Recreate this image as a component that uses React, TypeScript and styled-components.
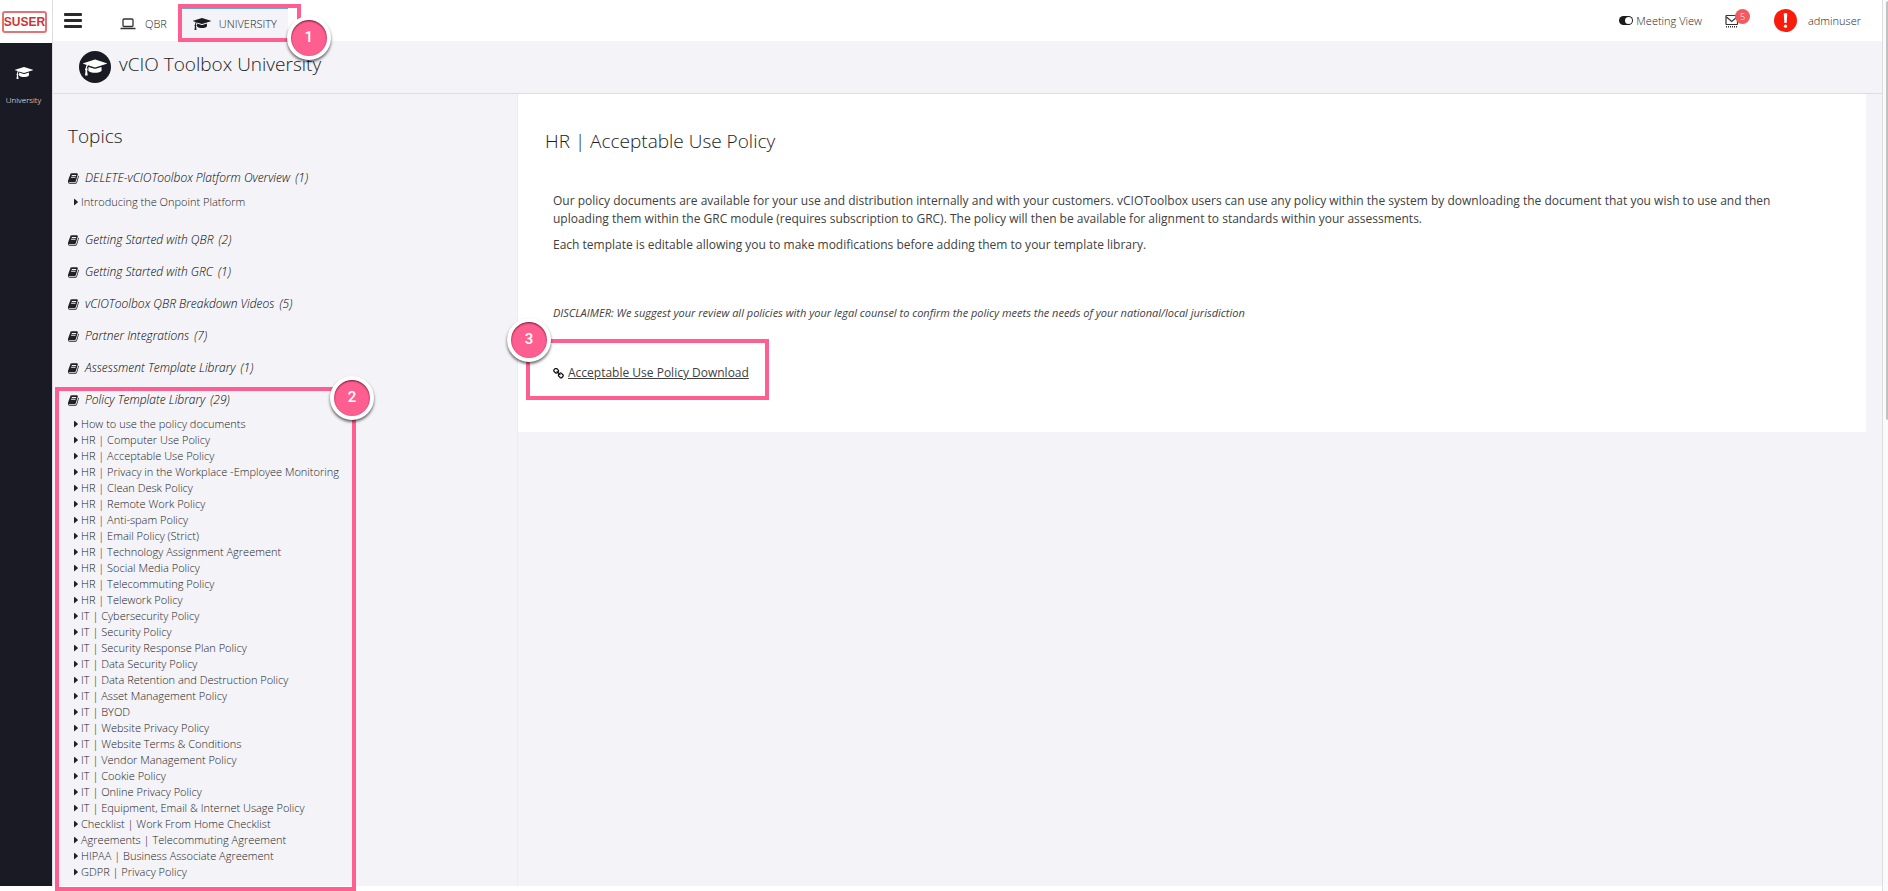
import React from 'react';
import styled, { createGlobalStyle, css } from 'styled-components';

const color = {
  canvas: '#f3f3f8',
  rail: '#191a23',
  line: '#dcdce1',
  ink: '#1c1c1c',
  text: '#404040',
  pink: '#ff5f90',
  red: '#f71c0c',
};

const GlobalStyle = createGlobalStyle`
  *, *::before, *::after { box-sizing: border-box; }
  body {
    margin: 0;
    background: #fff;
    color: ${color.ink};
    font: 300 11px/16px 'Open Sans', 'Noto Sans', sans-serif;
    overflow: hidden;
  }
  h1, h2, h3, p, ul { margin: 0; padding: 0; font-weight: inherit; }
  ul { list-style: none; }
  a { color: inherit; text-decoration: none; }
  button { margin: 0; padding: 0; border: 0; background: none; color: inherit; font: inherit; cursor: pointer; }
  svg { display: block; flex: none; }
`;

const Shell = styled.div`
  display: flex;
  min-height: 100vh;
`;

const Rail = styled.nav`
  display: flex;
  flex-direction: column;
  flex: none;
  width: 53px;
  margin-bottom: 5px;
  border-right: 1px solid ${color.line};
  background: ${color.rail};
`;

const LogoCell = styled.a`
  display: flex;
  align-items: center;
  justify-content: center;
  height: 43px;
  padding-right: 3px;
  background: #fff;
`;

const Logo = styled.span`
  display: flex;
  align-items: center;
  justify-content: center;
  width: 45px;
  height: 22px;
  border: 2px solid #e57373;
  border-radius: 3px;
  color: #cf3535;
  font: 700 12px/16px 'Liberation Sans', sans-serif;
`;

const RailLink = styled.a`
  display: flex;
  flex-direction: column;
  align-items: center;
  gap: 12px;
  padding: 23px 5px 0 0;
  color: #fff;
  font-size: 8px;
`;

const Page = styled.div`
  display: flex;
  flex-direction: column;
  flex: 1;
  min-width: 0;
  margin-bottom: 5px;
  background: ${color.canvas};
`;

const TopBar = styled.header`
  display: flex;
  justify-content: space-between;
  height: 41px;
  padding: 0 21px 0 11px;
  background: #fff;
`;

const MenuButton = styled.button`
  display: flex;
  flex-direction: column;
  gap: 3px;
  width: 18px;
  margin: 13px 26px 0 0;
  align-self: flex-start;
`;

const MenuBar = styled.span`
  height: 3px;
  border-radius: 1px;
  background: #2b2b2b;
`;

const BarGroup = styled.div`
  display: flex;
  align-items: center;
`;

const Tabs = styled.div`
  display: flex;
  align-self: flex-end;
  gap: 4px;
`;

const Tab = styled.a<{ $active?: boolean }>`
  position: relative;
  display: flex;
  align-items: center;
  gap: 8px;
  height: 33px;
  padding: 0 11px 2px;
  border-top: 1px solid transparent;
  ${({ $active }) => $active && css`
    border-top-color: #6fa5d0;
    background: ${color.canvas};
  `}
`;

const TabIcon = styled.span`
  display: flex;
  justify-content: center;
  width: 18px;
`;

const MeetingToggle = styled.button`
  display: flex;
  align-items: center;
  gap: 3px;
  margin-right: 23px;
`;

const MailButton = styled.button`
  position: relative;
  margin-right: 35px;
`;

const MailCount = styled.span`
  position: absolute;
  top: -5px;
  left: 10px;
  width: 15px;
  height: 15px;
  border-radius: 50%;
  background: #f25a5f;
  color: #fff;
  font-size: 9px;
  line-height: 15px;
  text-align: center;
`;

const UserLink = styled.a`
  display: flex;
  align-items: center;
  gap: 11px;
`;

const PageHead = styled.div`
  display: flex;
  align-items: center;
  gap: 8px;
  height: 53px;
  padding: 0 26px;
  border-bottom: 1px solid ${color.line};
`;

const HeadIcon = styled.span`
  display: flex;
  align-items: center;
  justify-content: center;
  width: 32px;
  height: 32px;
  border-radius: 50%;
  background: ${color.rail};
  color: #fff;
`;

const PageTitle = styled.h1`
  font-size: 19px;
  line-height: 24px;
  margin-bottom: 6px;
`;

const Columns = styled.div`
  display: flex;
  flex: 1;
  align-items: stretch;
`;

const Topics = styled.aside`
  flex: none;
  width: 465px;
  padding: 30px 0 6px 15px;
  border-right: 1px solid #ececf1;
`;

const TopicsTitle = styled.h2`
  margin-bottom: 22px;
  font-size: 19px;
  line-height: 24px;
`;

const Topic = styled.section<{ $open?: boolean }>`
  position: relative;
  width: fit-content;
  margin-bottom: ${({ $open }) => ($open ? 22 : 16)}px;
  &:last-child { margin-bottom: 0; }
`;

const TopicButton = styled.button`
  display: flex;
  align-items: center;
  gap: 6px;
  font-size: 12px;
  line-height: 16px;
  font-style: italic;
  color: #000;
`;

const TopicCount = styled.span`
  margin-left: 5px;
`;

const Lessons = styled.ul`
  padding: 8px 0 0 6px;
`;

const LessonLink = styled.a`
  display: flex;
  align-items: center;
  gap: 3px;
`;

const Content = styled.main`
  flex: 1;
  min-width: 0;
  padding-right: 16px;
`;

const Card = styled.article`
  padding: 35px 51px 50px 27px;
  background: #fff;
`;

const CardTitle = styled.h2`
  font-size: 19px;
  line-height: 24px;
`;

const Prose = styled.div`
  padding: 39px 0 0 8px;
  color: ${color.text};
  font-size: 12px;
  line-height: 18px;
  font-weight: 400;
`;

const Paragraph = styled.p`
  margin-bottom: 8px;
`;

const Disclaimer = styled.p`
  padding: 42px 0;
  font-size: 11px;
  line-height: 18px;
  font-style: italic;
`;

const Download = styled.div`
  position: relative;
  display: flex;
  align-items: center;
  gap: 4px;
  width: fit-content;
`;

const DownloadLink = styled.a`
  text-decoration: underline;
`;

const Highlight = styled.span<{ $inset: string }>`
  position: absolute;
  inset: ${({ $inset }) => $inset};
  border: 4px solid ${color.pink};
  pointer-events: none;
  z-index: 1;
`;

const StepBadge = styled.span<{ $side: 'left' | 'right'; $drop: number; $shift: number }>`
  position: absolute;
  top: ${({ $drop }) => $drop}px;
  ${({ $side }) => $side}: ${({ $shift }) => $shift}px;
  width: 44px;
  height: 44px;
  border: 4px solid #fff;
  border-radius: 50%;
  background: ${color.pink};
  box-shadow: 0 2px 3px rgba(0, 0, 0, 0.6), inset 0 1px 2px rgba(60, 0, 20, 0.8);
  color: #fff;
  font: 500 15px/34px Roboto, 'Liberation Sans', sans-serif;
  text-align: center;
`;

const ScrollTrack = styled.div`
  flex: none;
  width: 6px;
  padding: 1px 0 0 3px;
  border-left: 1px solid ${color.line};
  background: #fafafa;
`;

const ScrollThumb = styled.div`
  height: 47vh;
  border-radius: 2px 0 0 2px;
  background: #c1c1c1;
`;

const CapIcon = ({ width }: { width: number }) => (
  <svg width={width} height={Math.round((width * 7) / 9)} viewBox="0 0 2304 1792" fill="currentColor" aria-hidden>
    <path d="M1774 836l18 316q4 69-82 128t-235 93.500-323 34.500-323-34.500-235-93.500-82-128l18-316 574 181q22 7 48 7t48-7zm530-324q0 23-22 31l-1120 352q-4 1-10 1t-10-1l-652-206q-43 34-71 111.500t-34 178.500q63 36 63 109 0 69-58 107l58 433q2 14-8 25-9 11-24 11h-192q-15 0-24-11-10-11-8-25l58-433q-58-38-58-107 0-73 65-111 11-207 98-330l-333-104q-22-8-22-31t22-31l1120-352q4-1 10-1t10 1l1120 352q22 8 22 31z" />
  </svg>
);

const BookIcon = () => (
  <svg width="11" height="11" viewBox="40 128 1640 1536" fill="#222" aria-hidden>
    <path d="M1639 478q40 57 18 129l-275 906q-19 64-76.500 107.500t-122.500 43.500h-923q-77 0-148.500-53.500t-99.500-131.500q-24-67-2-127 0-4 3-27t4-37q1-8-3-21.500t-3-19.500q2-11 8-21t16.500-23.500 16.500-23.500q23-38 45-91.500t30-91.500q3-10 .5-30t-.5-28q3-11 17-28t17-23q21-36 42-92t25-90q1-9-2.500-32t.5-28q4-13 22-30.500t22-22.500q19-26 42.500-84.500t27.500-96.500q1-8-3-25.500t-2-26.500q2-8 9-18t18-23 17-21q8-12 16.500-30.500t15-35 16-36 19.500-32 26.500-23.500 36-11.500 47.500 5.500l-1 3q38-9 51-9h761q74 0 114 56t18 130l-274 906q-36 119-71.500 153.500t-128.500 34.500h-869q-27 0-38 15-11 16-1 43 24 70 144 70h923q29 0 56-15.500t35-41.500l300-987q7-22 5-57 38 15 59 43zm-1064 2q-4 13 2 22.500t20 9.500h608q13 0 25.500-9.500t16.500-22.500l21-64q4-13-2-22.500t-20-9.500h-608q-13 0-25.500 9.500t-16.500 22.500zm-83 256q-4 13 2 22.500t20 9.500h608q13 0 25.500-9.500t16.500-22.500l21-64q4-13-2-22.500t-20-9.500h-608q-13 0-25.500 9.500t-16.500 22.500z" />
  </svg>
);

const CaretIcon = () => (
  <svg width="4" height="8" viewBox="0 0 4 8" fill="#222" aria-hidden>
    <path d="M0 1.300Q0 .5.7 1L3.600 3.600Q4 4 3.600 4.400L.7 7Q0 7.500 0 6.700Z" />
  </svg>
);

const LaptopIcon = () => (
  <svg width="16" height="12" viewBox="0 0 16 12" fill="none" stroke="#333" aria-hidden>
    <rect x="3" y="1" width="10" height="7.500" rx="1" strokeWidth="1.300" />
    <path d="M0.500 10.500H15.500" strokeWidth="1.500" />
  </svg>
);

const ToggleIcon = () => (
  <svg width="14" height="9" viewBox="0 0 14 9" aria-hidden>
    <rect x="0" y="0" width="14" height="9" rx="4.500" fill="#1c1c1c" />
    <circle cx="9.500" cy="4.500" r="3.500" fill="#fff" />
  </svg>
);

const MailIcon = () => (
  <svg width="14" height="14" viewBox="0 0 14 14" fill="none" stroke="#333" aria-hidden>
    <rect x="1" y="1.500" width="11.500" height="9" rx="0.500" strokeWidth="1.200" />
    <path d="M1.500 3L6.700 7.500L12 3" strokeWidth="1.200" />
    <path d="M1 12.800H13" strokeWidth="1.400" strokeDasharray="1 1" />
  </svg>
);

const AlertIcon = () => (
  <svg width="23" height="23" viewBox="0 0 23 23" aria-hidden>
    <circle cx="11.500" cy="11.500" r="11.500" fill={color.red} />
    <path d="M9.700 4.600Q11.500 3.600 13.300 4.600L12.600 14H10.400Z" fill="#fff" />
    <circle cx="11.500" cy="17.200" r="1.600" fill="#fff" />
  </svg>
);

const ChainIcon = () => (
  <svg width="11" height="11" viewBox="60 60 1670 1670" fill="#111" aria-hidden>
    <path d="M1520 1216q0-40-28-68l-208-208q-28-28-68-28-42 0-72 32 3 3 19 18.500t21.500 21.500 15 19 13 25.500 3.500 27.500q0 40-28 68t-68 28q-15 0-27.500-3.500t-25.500-13-19-15-21.500-21.500-18.500-19q-33 31-33 73 0 40 28 68l206 207q27 27 68 27 40 0 68-26l147-146q28-28 28-67zm-703-705q0-40-28-68l-206-207q-28-28-68-28-39 0-68 27l-147 146q-28 28-28 67 0 40 28 68l208 208q27 27 68 27 42 0 72-31-3-3-19-18.500t-21.500-21.500-15-19-13-25.500-3.500-27.500q0-40 28-68t68-28q15 0 27.500 3.500t25.500 13 19 15 21.500 21.500 18.500 19q33-31 33-73zm895 705q0 120-85 203l-147 146q-83 83-203 83-121 0-204-85l-206-207q-83-83-83-203 0-123 88-209l-88-88q-86 88-208 88-120 0-204-84l-208-208q-84-84-84-204t85-203l147-146q83-83 203-83 121 0 204 85l206 207q83 83 83 203 0 123-88 209l88 88q86-88 208-88 120 0 204 84l208 208q84 84 84 204z" />
  </svg>
);

type TopicData = { title: string; count: number; lessons?: string[]; step?: number };

const topics: TopicData[] = [
  { title: 'DELETE-vCIOToolbox Platform Overview', count: 1, lessons: ['Introducing the Onpoint Platform'] },
  { title: 'Getting Started with QBR', count: 2 },
  { title: 'Getting Started with GRC', count: 1 },
  { title: 'vCIOToolbox QBR Breakdown Videos', count: 5 },
  { title: 'Partner Integrations', count: 7 },
  { title: 'Assessment Template Library', count: 1 },
  {
    title: 'Policy Template Library',
    count: 29,
    step: 2,
    lessons: [
      'How to use the policy documents',
      'HR | Computer Use Policy',
      'HR | Acceptable Use Policy',
      'HR | Privacy in the Workplace -Employee Monitoring',
      'HR | Clean Desk Policy',
      'HR | Remote Work Policy',
      'HR | Anti-spam Policy',
      'HR | Email Policy (Strict)',
      'HR | Technology Assignment Agreement',
      'HR | Social Media Policy',
      'HR | Telecommuting Policy',
      'HR | Telework Policy',
      'IT | Cybersecurity Policy',
      'IT | Security Policy',
      'IT | Security Response Plan Policy',
      'IT | Data Security Policy',
      'IT | Data Retention and Destruction Policy',
      'IT | Asset Management Policy',
      'IT | BYOD',
      'IT | Website Privacy Policy',
      'IT | Website Terms & Conditions',
      'IT | Vendor Management Policy',
      'IT | Cookie Policy',
      'IT | Online Privacy Policy',
      'IT | Equipment, Email & Internet Usage Policy',
      'Checklist | Work From Home Checklist',
      'Agreements | Telecommuting Agreement',
      'HIPAA | Business Associate Agreement',
      'GDPR | Privacy Policy',
    ],
  },
];

export default function App() {
  return (
    <Shell>
      <GlobalStyle />
      <Rail>
        <LogoCell href="#home"><Logo>SUSER</Logo></LogoCell>
        <RailLink href="#university"><CapIcon width={18} />University</RailLink>
      </Rail>
      <Page>
        <TopBar>
          <BarGroup>
            <MenuButton aria-label="Menu"><MenuBar /><MenuBar /><MenuBar /></MenuButton>
            <Tabs>
              <Tab href="#qbr"><TabIcon><LaptopIcon /></TabIcon>QBR</Tab>
              <Tab href="#university" $active>
                <TabIcon><CapIcon width={18} /></TabIcon>UNIVERSITY
                <Highlight $inset="-5px -13px -1px -4px">
                  <StepBadge $side="right" $drop={8} $shift={-34}>1</StepBadge>
                </Highlight>
              </Tab>
            </Tabs>
          </BarGroup>
          <BarGroup>
            <MeetingToggle><ToggleIcon />Meeting View</MeetingToggle>
            <MailButton aria-label="Messages"><MailIcon /><MailCount>5</MailCount></MailButton>
            <UserLink href="#account"><AlertIcon />adminuser</UserLink>
          </BarGroup>
        </TopBar>
        <PageHead>
          <HeadIcon><CapIcon width={24} /></HeadIcon>
          <PageTitle>vCIO Toolbox University</PageTitle>
        </PageHead>
        <Columns>
          <Topics>
            <TopicsTitle>Topics</TopicsTitle>
            {topics.map(({ title, count, lessons, step }) => (
              <Topic key={title} $open={!!lessons}>
                <TopicButton aria-expanded={!!lessons}>
                  <BookIcon />
                  <span>{title}<TopicCount>({count})</TopicCount></span>
                </TopicButton>
                {lessons && (
                  <Lessons>
                    {lessons.map((lesson) => (
                      <li key={lesson}><LessonLink href="#lesson"><CaretIcon />{lesson}</LessonLink></li>
                    ))}
                  </Lessons>
                )}
                {step && (
                  <Highlight $inset="-5px -17px -11px -13px">
                    <StepBadge $side="right" $drop={-15} $shift={-22}>{step}</StepBadge>
                  </Highlight>
                )}
              </Topic>
            ))}
          </Topics>
          <Content>
            <Card>
              <CardTitle>HR | Acceptable Use Policy</CardTitle>
              <Prose>
                <Paragraph>
                  Our policy documents are available for your use and distribution internally and with your customers. vCIOToolbox users can use any policy within the system by downloading the document that you wish to use and then uploading them within the GRC module (requires subscription to GRC). The policy will then be available for alignment to standards within your assessments.
                </Paragraph>
                <Paragraph>
                  Each template is editable allowing you to make modifications before adding them to your template library.
                </Paragraph>
                <Disclaimer>
                  DISCLAIMER: We suggest your review all policies with your legal counsel to confirm the policy meets the needs of your national/local jurisdiction
                </Disclaimer>
                <Download>
                  <ChainIcon />
                  <DownloadLink href="#download">Acceptable Use Policy Download</DownloadLink>
                  <Highlight $inset="-25px -20px -18px -27px">
                    <StepBadge $side="left" $drop={-25} $shift={-23}>3</StepBadge>
                  </Highlight>
                </Download>
              </Prose>
            </Card>
          </Content>
        </Columns>
      </Page>
      <ScrollTrack><ScrollThumb /></ScrollTrack>
    </Shell>
  );
}
